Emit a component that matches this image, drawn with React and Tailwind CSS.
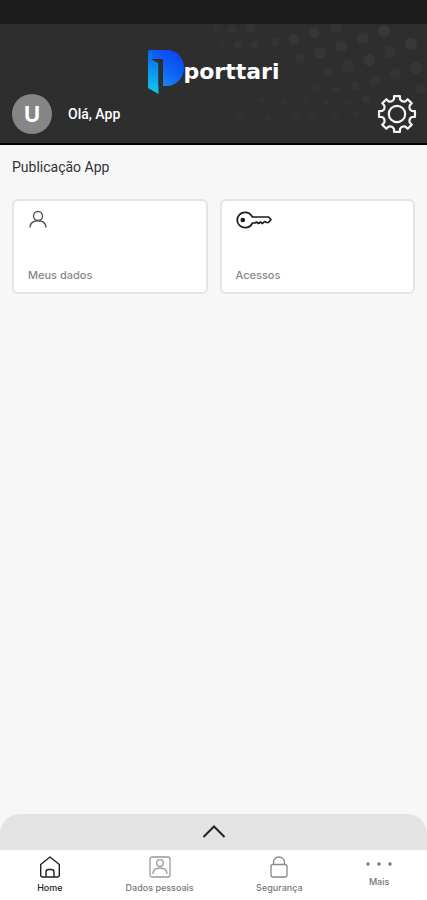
// Home screen of the Porttari app: branded header, shortcut cards and bottom navigation.

import React from 'react';

// Faint halftone dots on the header background: [x, y, radius, opacity]
const HEADER_DOTS = [
  [217, 4, 4, 0.02], [232, 5, 4, 0.03], [250, 3, 5, 0.03],
  [222, 19, 3, 0.02], [238, 21, 4, 0.03], [255, 21, 4, 0.03], [275, 18, 4, 0.03],
  [294, 15, 5, 0.04], [314, 9, 5, 0.04], [336, 3, 6, 0.03],
  [300, 35, 5, 0.03], [320, 29, 6, 0.04], [341, 22, 6, 0.04], [363, 14, 6, 0.04], [384, 7, 6, 0.05],
  [327, 48, 5, 0.03], [348, 42, 6, 0.03], [369, 36, 6, 0.04], [390, 28, 6, 0.03], [411, 20, 6, 0.05],
  [355, 62, 4, 0.03], [375, 57, 5, 0.03], [395, 50, 6, 0.03], [416, 44, 6, 0.04],
  [317, 65, 4, 0.02], [336, 65, 4, 0.02], [421, 65, 5, 0.03],
  [306, 77, 3, 0.02], [327, 79, 3, 0.02], [347, 79, 3, 0.02], [366, 75, 4, 0.03],
  [262, 76, 3, 0.02], [284, 79, 3, 0.02], [240, 93, 3, 0.02], [268, 95, 3, 0.02],
  [296, 93, 3, 0.02], [312, 92, 3, 0.02], [335, 92, 3, 0.02], [356, 90, 3, 0.02],
];

// Outline of an eight-toothed gear centred on the origin
const gearPath = () => {
  const point = (radius, angle) =>
    `${(radius * Math.sin(angle)).toFixed(2)} ${(-radius * Math.cos(angle)).toFixed(2)}`;
  const parts = [];
  for (let i = 0; i < 8; i += 1) {
    const a = (i * Math.PI) / 4;
    parts.push(`${i === 0 ? 'M' : 'L'}${point(15.2, a - 0.2)}`);
    parts.push(`L${point(18.2, a - 0.16)}`);
    parts.push(`L${point(18.2, a + 0.16)}`);
    parts.push(`L${point(15.2, a + 0.2)}`);
    parts.push(`Q${point(12.6, a + Math.PI / 8)} ${point(15.2, a + Math.PI / 4 - 0.2)}`);
  }
  return `${parts.join('')}Z`;
};

const GearIcon = () => (
  <svg className="size-10" viewBox="-20 -20 40 40" fill="none" stroke="#f3f3f3" strokeWidth="2.2" strokeLinejoin="round" aria-hidden="true">
    <path d={gearPath()} />
    <circle r="8.2" />
  </svg>
);

const LogoMark = () => (
  <svg className="h-11 w-9" viewBox="0 0 36 44" aria-hidden="true">
    <defs>
      <linearGradient id="bowl" x1="0.9" y1="0" x2="0.2" y2="1">
        <stop offset="0" stopColor="#0a3df5" />
        <stop offset="0.5" stopColor="#0d62f3" />
        <stop offset="1" stopColor="#1a8cf5" />
      </linearGradient>
      <linearGradient id="stem" x1="0" y1="0" x2="0" y2="1">
        <stop offset="0" stopColor="#0b63f6" />
        <stop offset="1" stopColor="#12c8ea" />
      </linearGradient>
    </defs>
    <path fill="url(#bowl)" d="M2 0H19C29 0 36 8 36 18C36 28 28 36 19 36H15V9H2Z" />
    <path fill="url(#stem)" d="M0 2Q0 0 2 0H4V9L10.500 13V44L0 38Z" />
    <path fill="#2e2e2e" d="M2.500 9H13Q15 9 15 11V36H10.500V13Z" />
  </svg>
);

const PersonIcon = () => (
  <svg className="h-5 w-5" viewBox="0 0 20 20" fill="none" stroke="#555" strokeWidth="1.4" strokeLinecap="round" aria-hidden="true">
    <circle cx="10" cy="6" r="4.5" />
    <path d="M2 17C2.4 13 5.4 10.8 10 10.8S17.6 13 18 17" />
  </svg>
);

const KeyIcon = () => (
  <svg className="h-5 w-9" viewBox="0 0 36 20" fill="none" stroke="#1c1c1c" strokeWidth="1.7" strokeLinejoin="round" aria-hidden="true">
    <path d="M16.500 7H32.500L35 9.500L32.500 12.500H30.500L28.500 11.500L26.500 13.500L24.500 12L22.500 13.500L20.500 12L19 13H16.500C15 16 12 17.700 9 17.700C4.700 17.700 1.200 14.300 1.200 10S4.700 2.300 9 2.300C12.200 2.300 15 4.200 16.500 7Z" />
    <circle cx="6.800" cy="10" r="1.500" fill="#1c1c1c" />
  </svg>
);

const HomeIcon = () => (
  <svg className="h-6 w-6" viewBox="0 0 24 24" fill="none" stroke="#222" strokeWidth="1.4" strokeLinejoin="round" aria-hidden="true">
    <path d="M2.700 9.500L12 2L21.300 9.500V20Q21.300 22 19.300 22H4.700Q2.700 22 2.700 20Z" />
    <path d="M8 22V17Q8 14.500 10.500 14.500H13.500Q16 14.500 16 17V22" />
  </svg>
);

const ProfileIcon = () => (
  <svg className="h-6 w-6" viewBox="0 0 24 24" fill="none" stroke="#999" strokeWidth="1.3" aria-hidden="true">
    <rect x="2" y="2" width="20" height="20" rx="2" />
    <circle cx="12" cy="8" r="3.3" />
    <path d="M5 19C5 15 8 13 12 13S19 15 19 19" />
  </svg>
);

const LockIcon = () => (
  <svg className="h-6 w-6" viewBox="0 0 24 24" fill="none" stroke="#888" strokeWidth="1.3" aria-hidden="true">
    <rect x="4" y="9.5" width="16" height="12.5" rx="2" />
    <path d="M6.500 9.500V7.500C6.500 4.300 8.800 2 12 2S17.500 4.300 17.500 7.500V9.500" />
  </svg>
);

const MoreIcon = () => (
  <svg className="h-[18px] w-7" viewBox="0 0 28 18" fill="#777" aria-hidden="true">
    <circle cx="3" cy="9" r="1.7" />
    <circle cx="14" cy="9" r="1.7" />
    <circle cx="25" cy="9" r="1.7" />
  </svg>
);

const CARDS = [
  { label: 'Meus dados', Icon: PersonIcon },
  { label: 'Acessos', Icon: KeyIcon },
];

const NAV_ITEMS = [
  { label: 'Home', Icon: HomeIcon, style: 'flex-[5] text-[#222]' },
  { label: 'Dados pessoais', Icon: ProfileIcon, style: 'flex-[6] text-[#777]' },
  { label: 'Segurança', Icon: LockIcon, style: 'flex-[6] text-[#777]' },
  { label: 'Mais', Icon: MoreIcon, style: 'flex-[4] text-[#777]' },
];

const Header = () => (
  <header className="relative overflow-hidden border-b-2 border-black bg-[#2e2e2e] px-3 pt-[26px] pb-[9px]">
    <svg className="absolute top-0 right-0 h-[120px] w-[427px]" viewBox="0 0 427 120" fill="#fff" aria-hidden="true">
      {HEADER_DOTS.map(([x, y, r, opacity]) => (
        <circle key={`${x}-${y}`} cx={x} cy={y} r={r} opacity={opacity} />
      ))}
    </svg>
    <div className="relative flex h-11 justify-center">
      <LogoMark />
      <span className="font-['DejaVu_Sans',sans-serif] text-[22px] leading-11 font-bold text-white">porttari</span>
    </div>
    <div className="relative flex items-center">
      <span className="flex size-10 items-center justify-center rounded-full bg-[#868686] font-['Inter',sans-serif] text-[22px] font-bold text-white">U</span>
      <span className="ml-4 text-sm font-medium text-white">Olá, App</span>
      <button type="button" aria-label="Configurações" className="-mr-0.5 ml-auto">
        <GearIcon />
      </button>
    </div>
  </header>
);

const App = () => {
  return (
    <div className="flex min-h-screen flex-col bg-[#f7f7f7] font-['Roboto',sans-serif]">
      <div className="h-6 bg-[#1d1d1d]" />
      <Header />
      <main className="flex-1 px-3 pt-3">
        <h1 className="text-sm leading-5 text-[#333]">Publicação App</h1>
        <div className="mt-[22px] grid grid-cols-2 gap-3">
          {CARDS.map(({ label, Icon }) => (
            <button
              key={label}
              type="button"
              className="flex h-[95px] flex-col items-start justify-between rounded-md border-2 border-[#e4e4e4] bg-white px-3.5 pt-[9px] pb-[9px]"
            >
              <Icon />
              <span className="font-['Inter',sans-serif] text-[11px] leading-4 font-medium text-[#888]">{label}</span>
            </button>
          ))}
        </div>
      </main>
      <button type="button" aria-label="Expandir" className="flex h-9 items-center justify-center rounded-t-[20px] bg-[#e3e3e3]">
        <svg className="h-4 w-6" viewBox="0 0 24 16" fill="none" stroke="#222" strokeWidth="2" aria-hidden="true">
          <path d="M1.500 13L12 2.500L22.500 13" />
        </svg>
      </button>
      <nav className="flex h-[50px] items-start bg-white pt-[5px] pr-2">
        {NAV_ITEMS.map(({ label, Icon, style }) => (
          <a key={label} href="#" className={`flex flex-col items-center ${style}`}>
            <Icon />
            <span className="mt-[3px] font-['Inter',sans-serif] text-[9px] leading-3 font-medium">{label}</span>
          </a>
        ))}
      </nav>
    </div>
  );
};

export default App;
